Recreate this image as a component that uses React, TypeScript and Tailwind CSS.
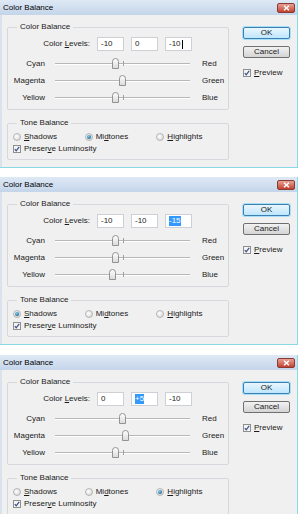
import React from "react";

type Tone = "shadows" | "midtones" | "highlights";

type DialogProps = {
  levels: [string, string, string];
  active: number;
  mode: "cursor" | "select";
  sliders: [number, number, number];
  tone: Tone;
};

function Thumb({ x }: { x: number }) {
  return (
    <svg
      className="absolute top-[3px]"
      style={{ left: x - 3.5 }}
      width="7"
      height="11"
      viewBox="0 0 7 11"
    >
      <defs>
        <linearGradient id="tg" x1="0" y1="0" x2="0" y2="1">
          <stop offset="0" stopColor="#ffffff" />
          <stop offset="1" stopColor="#dadada" />
        </linearGradient>
      </defs>
      <path
        d="M0.5 10.5 V3.5 Q0.5 0.5 3.5 0.5 Q6.5 0.5 6.5 3.5 V10.5 Z"
        fill="url(#tg)"
        stroke="#939393"
      />
    </svg>
  );
}

function Slider({ left, right, value }: { left: string; right: string; value: number }) {
  const x = 67.5 + value * 0.675;
  return (
    <div className="flex items-center h-[17px]">
      <div className="w-[37px] text-right">{left}</div>
      <div className="relative ml-[10px] w-[135px] h-full">
        <div className="absolute left-0 right-0 top-[8px] h-[1px] bg-[#b8b8b8]" />
        <div className="absolute left-0 right-0 top-[9px] h-[1px] bg-white" />
        <div className="absolute left-[68px] top-[6px] w-[1px] h-[5px] bg-[#a0a0a0]" />
        <Thumb x={x} />
      </div>
      <div className="ml-[12px]">{right}</div>
    </div>
  );
}

function Radio({ on }: { on: boolean }) {
  return (
    <svg width="8" height="8" viewBox="0 0 8 8" className="shrink-0">
      <defs>
        <radialGradient id="rg" cx="0.4" cy="0.4" r="0.7">
          <stop offset="0" stopColor="#ffffff" />
          <stop offset="1" stopColor="#d4d4d4" />
        </radialGradient>
        <radialGradient id="rb" cx="0.4" cy="0.35" r="0.7">
          <stop offset="0" stopColor="#7cd3f4" />
          <stop offset="1" stopColor="#1c5a8a" />
        </radialGradient>
      </defs>
      <circle cx="4" cy="4" r="3.5" fill="url(#rg)" stroke="#a8a8a8" strokeWidth="0.8" />
      {on && <circle cx="4" cy="4" r="2" fill="url(#rb)" />}
    </svg>
  );
}

function Check() {
  return (
    <svg width="8" height="8" viewBox="0 0 8 8" className="shrink-0">
      <rect x="0.5" y="0.5" width="7" height="7" fill="#f4f4f4" stroke="#8e8f8f" />
      <path d="M1.8 4.2 L3.2 5.8 L6.2 1.8" fill="none" stroke="#3c4f8a" strokeWidth="1.2" />
    </svg>
  );
}

function LevelInput({ value, state }: { value: string; state: "none" | "cursor" | "select" }) {
  return (
    <div className="w-[27px] h-[14px] bg-white border border-[#cdd1d6] flex items-center pl-[3px]">
      {state === "select" ? (
        <span className="bg-[#3399ff] text-white leading-[10px]">{value}</span>
      ) : (
        <span>{value}</span>
      )}
      {state === "cursor" && <span className="w-[1px] h-[9px] bg-black ml-[1px]" />}
    </div>
  );
}

function Dialog({ levels, active, mode, sliders, tone }: DialogProps) {
  const tones: { key: Tone; label: React.ReactNode }[] = [
    { key: "shadows", label: <><span className="underline">S</span>hadows</> },
    { key: "midtones", label: <>Mi<span className="underline">d</span>tones</> },
    { key: "highlights", label: <><span className="underline">H</span>ighlights</> },
  ];
  return (
    <div className="w-[298px] h-[168px] shrink-0 flex flex-col bg-[#f0f0f0] border-b border-r border-[#8ad9e6]">
      <div className="h-[15px] shrink-0 flex items-center justify-between pl-[3px] pr-[2px] bg-gradient-to-b from-[#dfe9f5] to-[#c4d5ea]">
        <span className="text-black">Color Balance</span>
        <div className="w-[18px] h-[10px] rounded-[2px] border border-[#8a3a32] bg-gradient-to-b from-[#e8a095] to-[#c2402e] flex items-center justify-center">
          <svg width="7" height="6" viewBox="0 0 7 6">
            <path d="M1 0.8 L6 5.2 M6 0.8 L1 5.2" stroke="white" strokeWidth="1.5" />
          </svg>
        </div>
      </div>
      <div className="flex flex-1 border-l-[2px] border-[#d9e3ee]">
        <div className="ml-[5px] w-[222px] flex flex-col">
          <div className="relative mt-[12px] h-[83px] border border-[#d5d9de] rounded-[2px] flex flex-col">
            <span className="absolute -top-[6px] left-[9px] px-[3px] bg-[#f0f0f0] leading-[10px]">
              Color Balance
            </span>
            <div className="flex items-center mt-[9px] h-[14px]">
              <div className="w-[82px] text-right">
                Color <span className="underline">L</span>evels:
              </div>
              <div className="ml-[7px] flex gap-[7px]">
                {levels.map((v, i) => (
                  <LevelInput key={i} value={v} state={i === active ? mode : "none"} />
                ))}
              </div>
            </div>
            <div className="mt-[4px] flex flex-col">
              <Slider left="Cyan" right="Red" value={sliders[0]} />
              <Slider left="Magenta" right="Green" value={sliders[1]} />
              <Slider left="Yellow" right="Blue" value={sliders[2]} />
            </div>
          </div>
          <div className="relative mt-[13px] h-[37px] border border-[#d5d9de] rounded-[2px] flex flex-col pl-[5px]">
            <span className="absolute -top-[6px] left-[9px] px-[3px] bg-[#f0f0f0] leading-[10px]">
              Tone Balance
            </span>
            <div className="flex mt-[7px] h-[12px] items-center">
              {tones.map((t) => (
                <div key={t.key} className="w-[72px] flex items-center gap-[3px]">
                  <Radio on={t.key === tone} />
                  <span>{t.label}</span>
                </div>
              ))}
            </div>
            <div className="flex h-[12px] items-center gap-[3px]">
              <Check />
              <span>
                Preser<span className="underline">v</span>e Luminosity
              </span>
            </div>
          </div>
        </div>
        <div className="ml-[14px] mt-[12px] flex flex-col">
          <div className="w-[47px] h-[12px] rounded-[2px] border border-[#3c7fb1] bg-gradient-to-b from-[#eaf6fd] to-[#bee6fd] flex items-center justify-center shadow-[0_0_0_1px_#a6dff7]">
            OK
          </div>
          <div className="mt-[7px] w-[47px] h-[12px] rounded-[2px] border border-[#707070] bg-gradient-to-b from-[#f2f2f2] to-[#d4d4d4] flex items-center justify-center">
            Cancel
          </div>
          <div className="mt-[10px] flex items-center gap-[3px] h-[10px]">
            <Check />
            <span>
              <span className="underline">P</span>review
            </span>
          </div>
        </div>
      </div>
    </div>
  );
}

export default function App() {
  return (
    <div className="w-[300px] h-[514px] overflow-hidden bg-white flex flex-col font-['Liberation_Sans',Arial,sans-serif] text-[8px] leading-[10px] text-[#1a1a1a]">
      <Dialog levels={["-10", "0", "-10"]} active={2} mode="cursor" sliders={[-10, 0, -10]} tone="midtones" />
      <div className="h-[9px] shrink-0" />
      <Dialog levels={["-10", "-10", "-15"]} active={2} mode="select" sliders={[-10, -10, -15]} tone="shadows" />
      <div className="h-[10px] shrink-0" />
      <Dialog levels={["0", "+5", "-10"]} active={1} mode="select" sliders={[0, 5, -10]} tone="highlights" />
    </div>
  );
}
